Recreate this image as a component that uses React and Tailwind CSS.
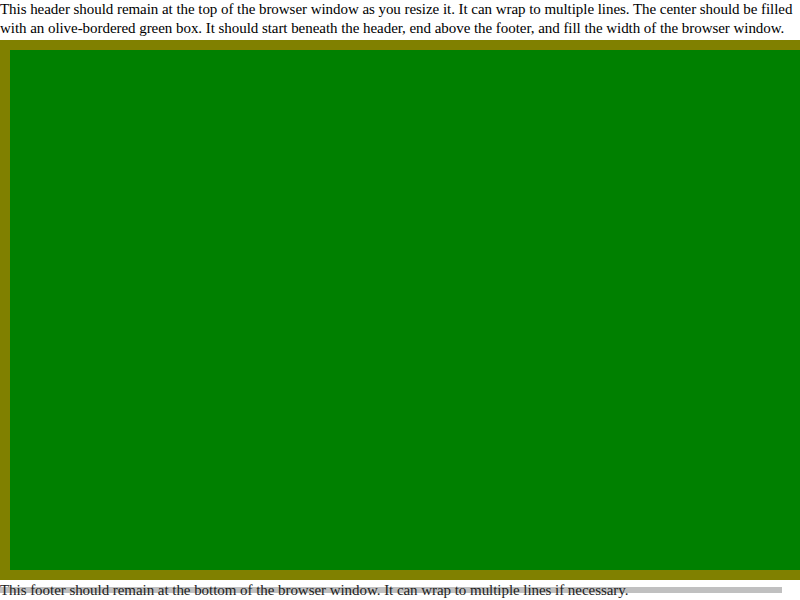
export default function App() {
  return (
    <div className="flex h-[600px] w-[800px] flex-col overflow-hidden bg-white font-['Liberation_Serif',serif] text-[15px] tracking-[-0.05px] text-black">
      <header className="h-[40px] pr-[2px] leading-[19px]">
        This header should remain at the top of the browser window as you resize it. It can wrap to multiple lines. The center should be filled with an olive-bordered green box. It should start beneath the header, end above the footer, and fill the width of the browser window.
      </header>
      <main className="box-border w-[820px] flex-1 border-[10px] border-[#808000] bg-[#008000]" />
      <footer className="relative h-[20px] leading-[20px] text-[#222]">
        <div className="absolute left-0 top-[7px] h-[6px] w-[782px] bg-[#c0c0c0]" />
        <span className="relative">This footer should remain at the bottom of the browser window. It can wrap to multiple lines if necessary.</span>
      </footer>
    </div>
  );
}
